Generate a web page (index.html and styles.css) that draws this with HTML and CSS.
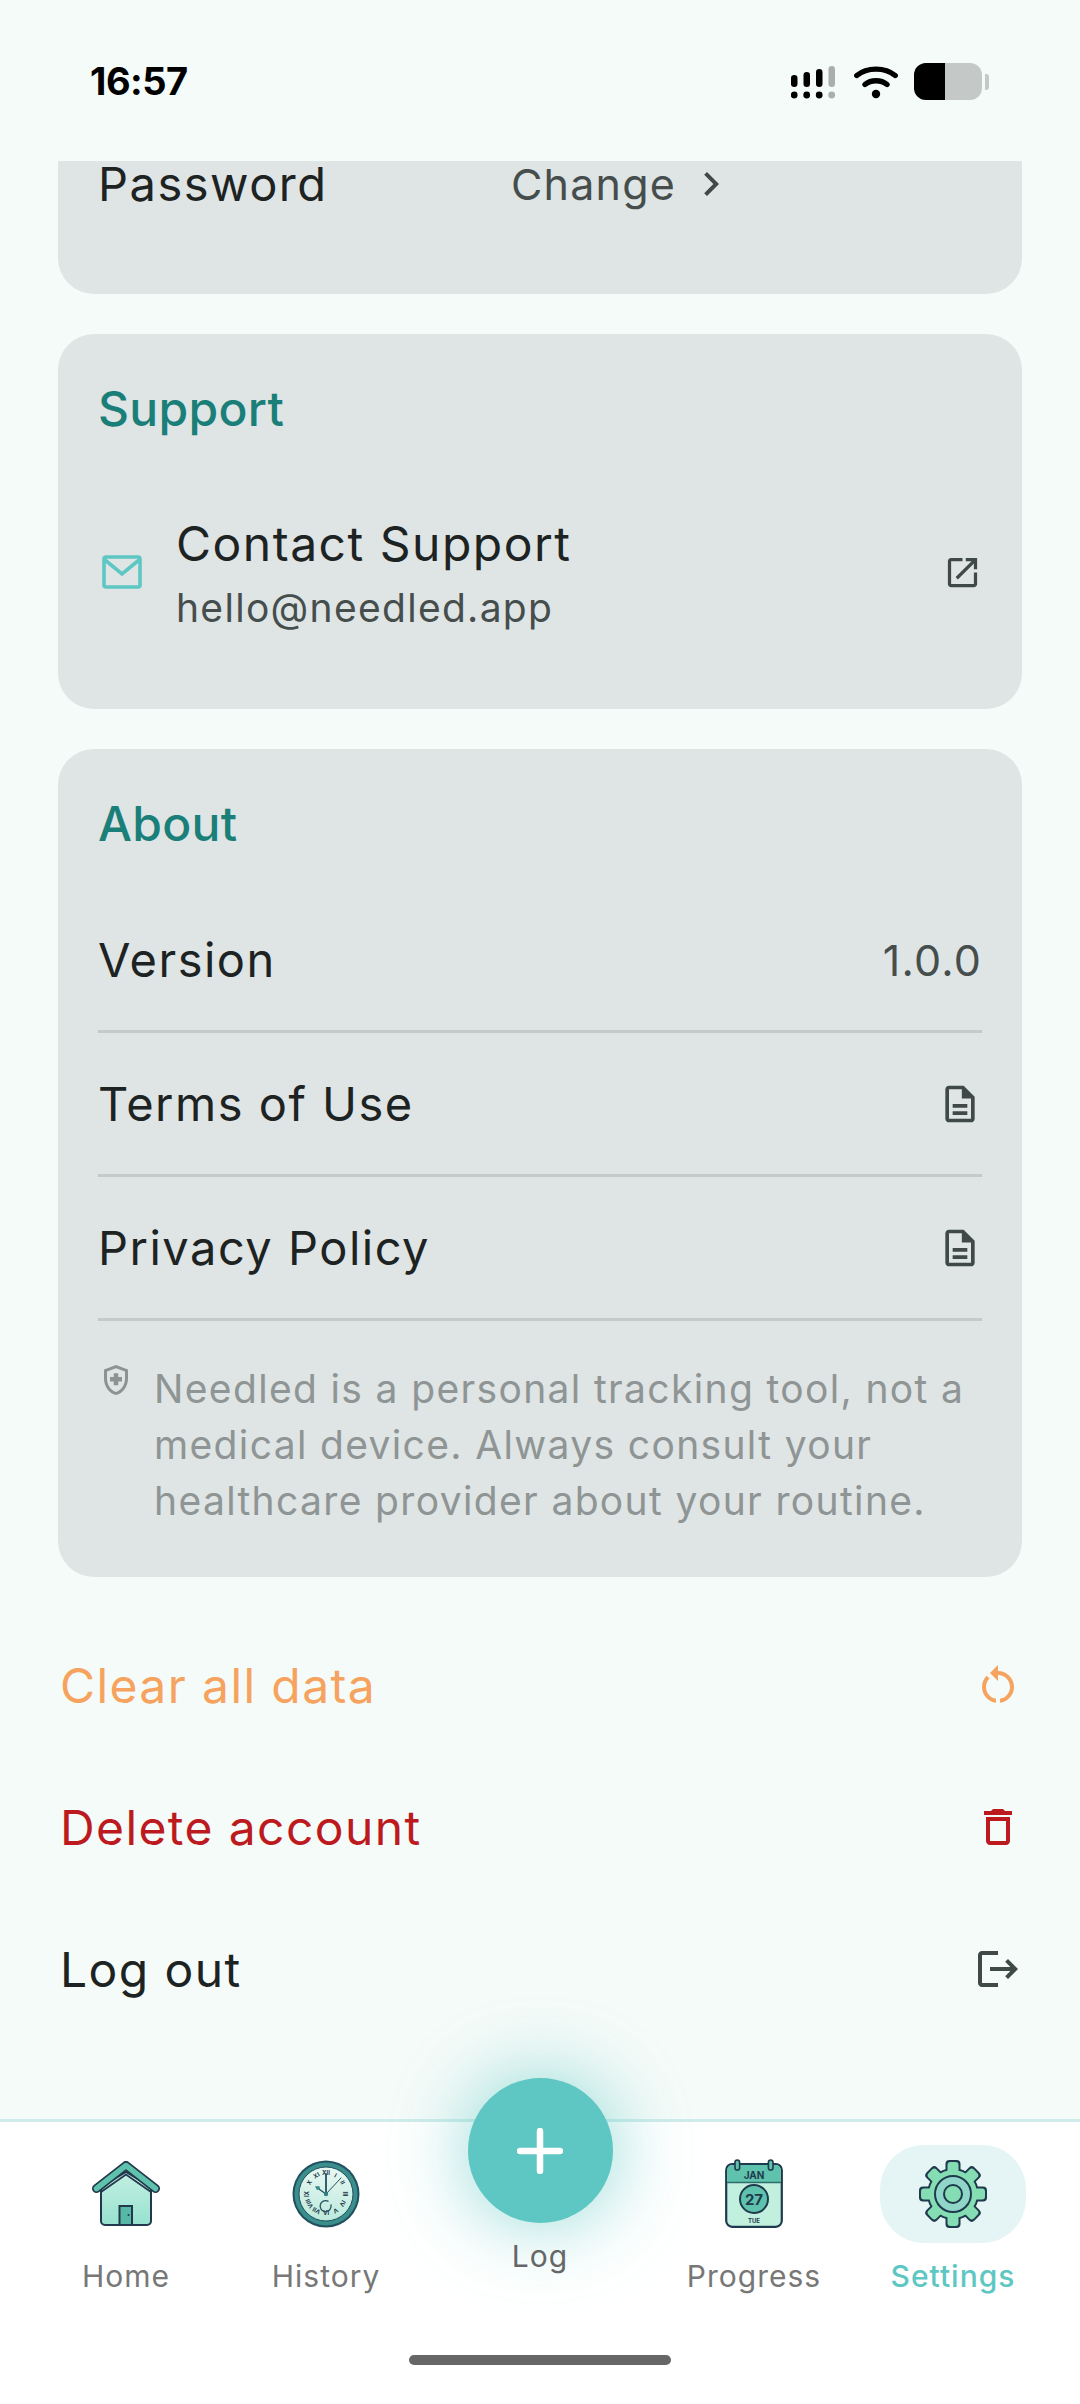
FILE: index.html
```html
<!DOCTYPE html>
<html lang="en">
<head>
    <meta charset="UTF-8">
    <meta name="viewport" content="width=device-width, initial-scale=1.0">
    <title>Needled - Settings</title>
    <link rel="stylesheet" href="styles.css">
</head>
<body>
    <div class="phone">
        <!-- Status bar -->
        <div class="status-bar">
            <span class="time">16:57</span>
            <div class="status-icons">
                <svg class="signal" width="46" height="36" viewBox="0 0 46 36">
                    <g fill="#000">
                        <rect x="0" y="11" width="6.5" height="12" rx="3.2"/>
                        <rect x="12.5" y="8" width="6.5" height="15" rx="3.2"/>
                        <rect x="25" y="5" width="6.5" height="18" rx="3.2"/>
                        <circle cx="3.2" cy="31" r="3.4"/>
                        <circle cx="15.7" cy="31" r="3.4"/>
                        <circle cx="28.2" cy="31" r="3.4"/>
                    </g>
                    <g fill="#aaaeac">
                        <rect x="37.5" y="2" width="6.5" height="21" rx="3.2"/>
                        <circle cx="40.7" cy="31" r="3.4"/>
                    </g>
                </svg>
                <svg class="wifi" width="44" height="36" viewBox="0 0 44 36">
                    <g fill="none" stroke="#000" stroke-width="5.4" stroke-linecap="round">
                        <path d="M2.8 11.5 C13 3 31 3 41.200 11.500"/>
                        <path d="M11 20.500 C17 15.500 27 15.500 33 20.500"/>
                    </g>
                    <circle cx="22" cy="30" r="4.200" fill="#000"/>
                </svg>
                <div class="battery">
                    <div class="battery-level"></div>
                </div>
                <div class="battery-nub"></div>
            </div>
        </div>

        <div class="scroll">
            <div class="card card-clipped">
                <div class="password-row">
                    <span class="label password-label">Password</span>
                    <span class="value">Change</span>
                    <svg class="icon-chevron" width="48" height="48" viewBox="0 0 24 24"><path fill="#3f4948" d="M10 6L8.590 7.410 13.170 12l-4.580 4.590L10 18l6-6z"/></svg>
                </div>
            </div>

            <!-- Support -->
            <div class="card">
                <h2 class="card-title">Support</h2>
                <div class="contact-row">
                    <svg class="icon-mail" width="40" height="34" viewBox="0 0 40 34">
                        <rect x="2" y="2" width="36" height="30" rx="2" fill="none" stroke="#5ec7c3" stroke-width="3.600"/>
                        <path d="M3 5L20 19 37 5" fill="none" stroke="#5ec7c3" stroke-width="3.600"/>
                    </svg>
                    <div class="contact-text">
                        <div class="label">Contact Support</div>
                        <div class="sub">hello@needled.app</div>
                    </div>
                    <svg class="icon-open" width="39" height="39" viewBox="0 0 24 24"><path fill="#3f4948" d="M19 19H5V5h7V3H5c-1.110 0-2 .9-2 2v14c0 1.100.89 2 2 2h14c1.100 0 2-.9 2-2v-7h-2v7zM14 3v2h3.590l-9.830 9.830 1.410 1.410L19 6.410V10h2V3h-7z"/></svg>
                </div>
            </div>

            <!-- About -->
            <div class="card">
                <h2 class="card-title">About</h2>
                <div class="about-list">
                    <div class="about-row">
                        <span class="label">Version</span>
                        <span class="value">1.0.0</span>
                    </div>
                    <div class="about-row">
                        <span class="label">Terms of Use</span>
                        <svg class="icon-doc" width="44" height="44" viewBox="0 0 24 24"><path fill="#3f4948" d="M8 16h8v2H8zm0-4h8v2H8zm6-10H6c-1.100 0-2 .9-2 2v16c0 1.100.89 2 2 2h12c1.100 0 2-.9 2-2V8l-6-6zm4 18H6V4h7v5h5v11z"/></svg>
                    </div>
                    <div class="about-row">
                        <span class="label">Privacy Policy</span>
                        <svg class="icon-doc" width="44" height="44" viewBox="0 0 24 24"><path fill="#3f4948" d="M8 16h8v2H8zm0-4h8v2H8zm6-10H6c-1.100 0-2 .9-2 2v16c0 1.100.89 2 2 2h12c1.100 0 2-.9 2-2V8l-6-6zm4 18H6V4h7v5h5v11z"/></svg>
                    </div>
                </div>
                <div class="note">
                    <svg class="icon-shield" width="36" height="36" viewBox="0 0 24 24"><path fill="#8c9493" d="M10.500 13H8v-3h2.500V7.500h3V10H16v3h-2.500v2.500h-3V13zM12 2L4 5v6.090c0 5.050 3.410 9.760 8 10.910 4.590-1.150 8-5.860 8-10.910V5l-8-3zm6 9.090c0 4-2.550 7.700-6 8.830-3.450-1.130-6-4.820-6-8.830v-4.700l6-2.250 6 2.250v4.700z"/></svg>
                    <p>Needled is a personal tracking tool, not a medical device. Always consult your healthcare provider about your routine.</p>
                </div>
            </div>

            <!-- Account actions -->
            <div class="actions">
                <div class="action-row clear">
                    <span>Clear all data</span>
                    <svg width="48" height="48" viewBox="0 0 24 24"><path fill="#f6a35f" d="M12 5V2L8 6l4 4V7c3.310 0 6 2.690 6 6 0 2.970-2.160 5.430-5 5.910v2.020c3.950-.49 7-3.850 7-7.930 0-4.420-3.580-8-8-8zm-6 8c0-1.650.67-3.150 1.760-4.240L6.340 7.340C4.900 8.790 4 10.790 4 13c0 4.080 3.050 7.440 7 7.930v-2.020c-2.840-.48-5-2.940-5-5.910z"/></svg>
                </div>
                <div class="action-row delete">
                    <span>Delete account</span>
                    <svg width="48" height="48" viewBox="0 0 24 24"><path fill="#bc1a1f" d="M6 19c0 1.100.9 2 2 2h8c1.100 0 2-.9 2-2V7H6v12zM8 9h8v10H8V9zm7.500-5l-1-1h-5l-1 1H5v2h14V4h-3.500z"/></svg>
                </div>
                <div class="action-row">
                    <span>Log out</span>
                    <svg width="48" height="48" viewBox="0 0 24 24"><path fill="#3f4948" d="M17 7l-1.410 1.410L18.170 11H8v2h10.170l-2.580 2.580L17 17l5-5zM4 5h8V3H4c-1.100 0-2 .9-2 2v14c0 1.100.9 2 2 2h8v-2H4V5z"/></svg>
                </div>
            </div>
        </div>

        <!-- Bottom nav -->
        <div class="nav">
            <div class="nav-items">
                <div class="nav-item">
                    <div class="nav-icon">
                        <svg width="68" height="66" viewBox="0 0 68 66">
                            <defs>
                                <linearGradient id="houseFill" x1="0" y1="0" x2="0" y2="1">
                                    <stop offset="0" stop-color="#c4efe2"/>
                                    <stop offset="1" stop-color="#97e2cf"/>
                                </linearGradient>
                            </defs>
                            <path d="M9 26L34 11 59 26V60a4 4 0 0 1-4 4H13a4 4 0 0 1-4-4z" fill="url(#houseFill)" stroke="#22384c" stroke-width="2"/>
                            <path d="M4.500 27.500L34 4.500 63.500 27.500" fill="none" stroke="#22384c" stroke-width="9" stroke-linecap="round" stroke-linejoin="round"/>
                            <path d="M4.500 27.500L34 4.500 63.500 27.500" fill="none" stroke="#5fc2ad" stroke-width="5.500" stroke-linecap="round" stroke-linejoin="round"/>
                            <path d="M9 31L34 13.500 59 31" fill="none" stroke="#22384c" stroke-width="1.800"/>
                            <rect x="27.500" y="45" width="12.500" height="19" fill="#56b8a5" stroke="#22384c" stroke-width="2"/>
                            <circle cx="36.500" cy="54" r="1" fill="#22384c"/>
                        </svg>
                    </div>
                    <span class="nav-label">Home</span>
                </div>
                <div class="nav-item">
                    <div class="nav-icon">
                        <svg width="68" height="68" viewBox="0 0 68 68">
                            <defs>
                                <linearGradient id="clockFace" x1="0" y1="0" x2="0" y2="1">
                                    <stop offset="0" stop-color="#e8f8f3"/>
                                    <stop offset="1" stop-color="#bce9dc"/>
                                </linearGradient>
                            </defs>
                            <circle cx="34" cy="34" r="33.500" fill="#22505f"/>
                            <circle cx="34" cy="34" r="31.500" fill="#3a8e8b"/>
                            <circle cx="34" cy="34" r="27" fill="url(#clockFace)" stroke="#22505f" stroke-width="1"/>
                            <g class="clock-numerals" font-size="6" font-weight="700" text-anchor="middle" fill="#1f3a4a">
                                <text x="34" y="15">XII</text>
                                <text x="43.500" y="17.500" transform="rotate(30 43.500 15.500)">I</text>
                                <text x="50.500" y="24.500" transform="rotate(60 50.500 22.500)">II</text>
                                <text x="53" y="36" transform="rotate(90 53 34)">III</text>
                                <text x="50.500" y="45.500" transform="rotate(120 50.500 43.500)">IV</text>
                                <text x="43.500" y="52.500" transform="rotate(150 43.500 50.500)">V</text>
                                <text x="34" y="55">VI</text>
                                <text x="24.500" y="52.500" transform="rotate(-150 24.500 50.500)">VII</text>
                                <text x="17.500" y="45.500" transform="rotate(-120 17.500 43.500)">VIII</text>
                                <text x="15" y="36" transform="rotate(-90 15 34)">IX</text>
                                <text x="17.500" y="24.500" transform="rotate(-60 17.500 22.500)">X</text>
                                <text x="24.500" y="17.500" transform="rotate(-30 24.500 15.500)">XI</text>
                            </g>
                            <g fill="none" stroke="#22505f" stroke-linecap="round">
                                <path d="M34 34V14" stroke-width="1.800"/>
                                <path d="M34 34L49 18" stroke-width="1"/>
                                <path d="M34 34L24 27" stroke-width="1.400"/>
                                <path d="M39 45a5.500 5.500 0 1 1-3-3.800" stroke-width="1.300"/>
                            </g>
                            <circle cx="26" cy="28" r="2" fill="#3a8e8b"/>
                            <circle cx="34" cy="34" r="2.200" fill="#2f7f80"/>
                        </svg>
                    </div>
                    <span class="nav-label">History</span>
                </div>
                <div class="nav-item">
                    <div class="fab">
                        <svg width="46" height="46" viewBox="0 0 46 46">
                            <path d="M23 3V43M3 23H43" fill="none" stroke="#fff" stroke-width="6.500" stroke-linecap="round"/>
                        </svg>
                    </div>
                    <span class="nav-label log-label">Log</span>
                </div>
                <div class="nav-item">
                    <div class="nav-icon">
                        <svg width="58" height="70" viewBox="0 0 58 70">
                            <rect x="1.200" y="5" width="55.600" height="62.800" rx="6" fill="#c2f0df" stroke="#1f3a4c" stroke-width="2.200"/>
                            <path d="M2.300 23V11a5 5 0 0 1 5-5h43.400a5 5 0 0 1 5 5V23z" fill="#5fc2ad"/>
                            <path d="M2 23.500H56" stroke="#2c6d6c" stroke-width="1.400"/>
                            <rect x="10" y="1" width="4.600" height="10" rx="2.300" fill="#5fc2ad" stroke="#1f3a4c" stroke-width="1.600"/>
                            <rect x="43.400" y="1" width="4.600" height="10" rx="2.300" fill="#5fc2ad" stroke="#1f3a4c" stroke-width="1.600"/>
                            <circle cx="29" cy="40" r="14" fill="#5fc2ad" stroke="#1f3a4c" stroke-width="2"/>
                            <g text-anchor="middle" fill="#1f3a4c" font-weight="700">
                                <text x="29" y="19.500" font-size="10">JAN</text>
                                <text x="29" y="45.500" font-size="15">27</text>
                                <text x="29" y="63.500" font-size="6">TUE</text>
                            </g>
                        </svg>
                    </div>
                    <span class="nav-label">Progress</span>
                </div>
                <div class="nav-item active">
                    <div class="nav-icon">
                        <svg width="68" height="68" viewBox="0 0 68 68">
                            <g fill="#1f3a4c">
                                <rect x="26.500" y="0" width="15" height="68" rx="4"/>
                                <rect x="26.500" y="0" width="15" height="68" rx="4" transform="rotate(45 34 34)"/>
                                <rect x="26.500" y="0" width="15" height="68" rx="4" transform="rotate(90 34 34)"/>
                                <rect x="26.500" y="0" width="15" height="68" rx="4" transform="rotate(135 34 34)"/>
                                <circle cx="34" cy="34" r="26"/>
                            </g>
                            <g fill="#85ddb3">
                                <rect x="28.500" y="2" width="11" height="64" rx="3"/>
                                <rect x="28.500" y="2" width="11" height="64" rx="3" transform="rotate(45 34 34)"/>
                                <rect x="28.500" y="2" width="11" height="64" rx="3" transform="rotate(90 34 34)"/>
                                <rect x="28.500" y="2" width="11" height="64" rx="3" transform="rotate(135 34 34)"/>
                                <circle cx="34" cy="34" r="24"/>
                            </g>
                            <circle cx="34" cy="34" r="18" fill="#8fd5c8" stroke="#1f3a4c" stroke-width="2"/>
                            <circle cx="34" cy="34" r="9" fill="#85ddb3" stroke="#1f3a4c" stroke-width="2"/>
                        </svg>
                    </div>
                    <span class="nav-label">Settings</span>
                </div>
            </div>
            <div class="home-indicator"></div>
        </div>
    </div>
</body>
</html>
```

FILE: styles.css
```css
/* Global Styles */
* {
    box-sizing: border-box;
}

body {
    margin: 0;
    padding: 0;
    background: #f5fbf9;
    font-family: "Inter", "Noto Sans", sans-serif;
    color: #1d2322;
}

h2, p {
    margin: 0;
}

svg {
    display: block;
    flex-shrink: 0;
}

.phone {
    width: 1080px;
    height: 2404px;
    display: flex;
    flex-direction: column;
    overflow: hidden;
}

/* Status bar */
.status-bar {
    height: 161px;
    flex-shrink: 0;
    display: flex;
    align-items: flex-start;
    justify-content: space-between;
    padding: 58px 91px 0 90px;
}

.time {
    font-size: 38px;
    line-height: 46px;
    font-weight: 700;
    color: #000;
    letter-spacing: -0.5px;
}

.status-icons {
    display: flex;
    align-items: center;
    height: 37px;
    margin-top: 5px;
}

.signal {
    margin-right: 17px;
}

.wifi {
    margin-right: 16px;
}

.battery {
    width: 68px;
    height: 37px;
    border-radius: 12px;
    background: #c4c9c7;
    overflow: hidden;
}

.battery-level {
    width: 31px;
    height: 100%;
    background: #000;
}

.battery-nub {
    width: 4px;
    height: 16px;
    margin-left: 3px;
    border-radius: 0 3px 3px 0;
    background: #c4c9c7;
}

/* Scrolling content */
.scroll {
    flex: 1;
    min-height: 0;
    padding: 0 58px;
}

.card {
    background: #dfe4e4;
    border-radius: 36px;
    padding: 48px 40px;
    margin-bottom: 40px;
}

.card-clipped {
    height: 133px;
    padding-top: 0;
    border-radius: 0 0 36px 36px;
}

.card-title {
    font-size: 48px;
    line-height: 54px;
    font-weight: 500;
    letter-spacing: 0.3px;
    color: #1a7f78;
}

.label {
    font-size: 47px;
    line-height: 64px;
    letter-spacing: 1.5px;
}

.contact-text .label {
    font-size: 48px;
}

.value {
    font-size: 43px;
    line-height: 64px;
    letter-spacing: 1.2px;
    color: #454e4d;
}

.sub {
    font-size: 39px;
    line-height: 64px;
    letter-spacing: 1.3px;
    color: #454e4d;
}

.password-row {
    display: flex;
    align-items: center;
    height: 46px;
}

.password-row .label,
.password-row .value {
    line-height: 46px;
}

.password-label {
    width: 413px;
}

.icon-chevron {
    margin-left: 11px;
}

.contact-row {
    display: flex;
    align-items: center;
    margin-top: 76px;
    margin-bottom: 21px;
}

.icon-mail {
    margin-left: 4px;
    margin-bottom: 8px;
}

.icon-open {
    margin-bottom: 8px;
}

.contact-text {
    flex: 1;
    margin-left: 34px;
}

.about-list {
    margin-top: 38px;
}

.about-row {
    height: 144px;
    display: flex;
    align-items: center;
    justify-content: space-between;
    border-bottom: 3px solid #c3cbc9;
}

.note {
    display: flex;
    align-items: flex-start;
    gap: 20px;
    margin-top: 40px;
}

.icon-shield {
    margin-top: 1px;
}

.note p {
    font-size: 39px;
    line-height: 56px;
    letter-spacing: 1.35px;
    color: #8e9594;
}

/* Account actions */
.actions {
    margin-top: -3px;
    padding-left: 2px;
}

.action-row {
    height: 142px;
    display: flex;
    align-items: center;
    justify-content: space-between;
    font-size: 48px;
    letter-spacing: 1.4px;
}

.clear {
    color: #f6a35f;
}

.delete {
    color: #bc1a1f;
}

/* Bottom nav */
.nav {
    height: 285px;
    flex-shrink: 0;
    background: #fff;
    border-top: 3px solid #cfecea;
    display: flex;
    flex-direction: column;
    align-items: center;
}

.nav-items {
    width: 100%;
    display: grid;
    grid-template-columns: 148px 252px 176px 252px 146px;
    padding: 23px 0 0 52px;
}

.nav-item {
    display: flex;
    flex-direction: column;
    align-items: center;
    min-width: 0;
}

.nav-icon {
    width: 146px;
    height: 98px;
    border-radius: 44px;
    display: flex;
    align-items: center;
    justify-content: center;
}

.nav-label {
    margin-top: 11px;
    font-size: 30px;
    line-height: 44px;
    letter-spacing: 1px;
    color: #777;
}

.nav-item.active .nav-icon {
    background: #e5f5f5;
}

.nav-item.active .nav-label {
    color: #5ec7c3;
    font-weight: 500;
}

.fab {
    width: 145px;
    height: 145px;
    margin-top: -67px;
    border-radius: 50%;
    background: #5ec7c3;
    box-shadow: 0 0 80px rgba(94, 199, 195, 0.7);
    display: flex;
    align-items: center;
    justify-content: center;
}

.log-label {
    margin-top: 11px;
    color: #666;
}

.home-indicator {
    width: 262px;
    height: 10px;
    margin-top: 57px;
    border-radius: 5px;
    background: #666;
}
```
